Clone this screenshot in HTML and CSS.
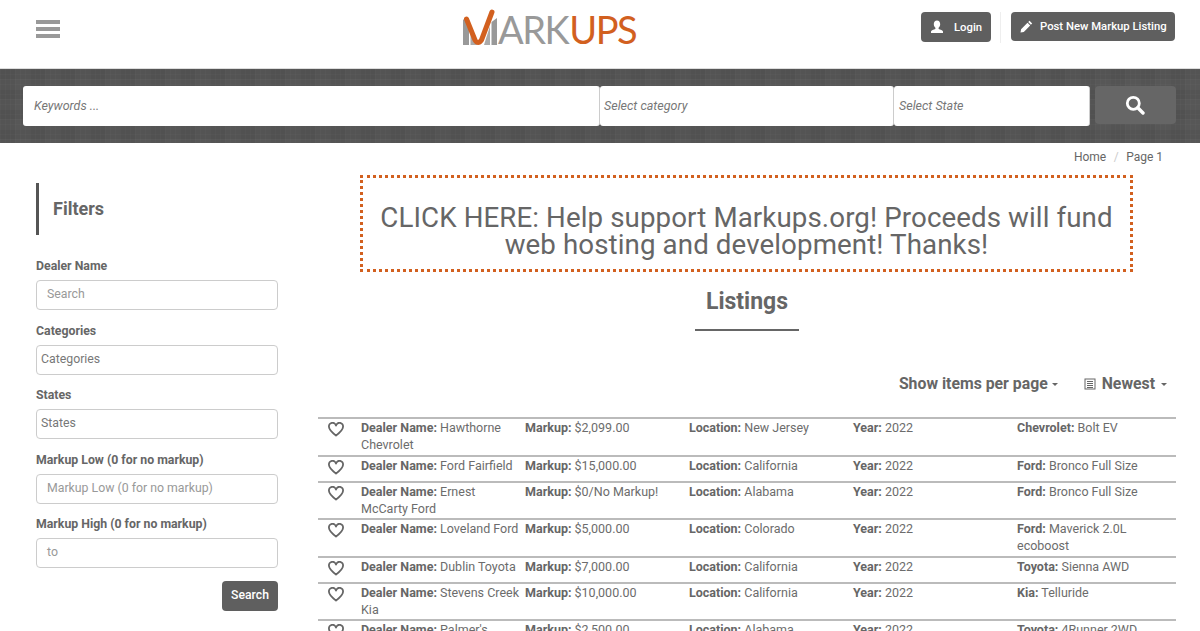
FILE: index.html
```html
<!DOCTYPE html>
<html lang="en">
<head>
  <meta charset="UTF-8" />
  <title>Markups</title>
  <link rel="stylesheet" href="styles.css">
</head>
<body>

  <header class="topbar">
    <div class="burger"><span></span><span></span><span></span></div>
    <div class="logo">
      <svg class="logo-mark" width="35" height="37" viewBox="0 0 35 37">
        <path d="M0 11 L2 9 L6 17 L6 36 L0 36 Z" fill="#999"/>
        <path d="M7.500 20 L14 36 L7.500 36 Z" fill="#aaa"/>
        <path d="M27 17 L27 36 L21 36 Z" fill="#aaa"/>
        <path d="M28.500 13 L34 9 L34 36 L28.500 36 Z" fill="#999"/>
        <path d="M3.500 10 L12 31 Q15 36 18.500 31 L29 3" fill="none" stroke="#d2601f" stroke-width="5" stroke-linecap="round" stroke-linejoin="round"/>
      </svg>
      <span class="logo-grey">ARK</span><span class="logo-orange">UPS</span>
    </div>
    <div class="top-actions">
      <a class="btn btn-login">
        <svg width="14" height="14" viewBox="0 0 14 14"><path d="M7 0.500c2 0 3.200 1.500 3.200 3.600 0 1.600-.7 3-1.600 3.700v1.200c1.600.6 4.400 1.100 4.400 2.600V13H1v-1.400c0-1.500 2.800-2 4.400-2.600V7.800C4.500 7.100 3.800 5.700 3.800 4.100 3.800 2 5 .5 7 .5z" fill="#fff"/></svg>
        <span>Login</span>
      </a>
      <div class="top-sep"></div>
      <a class="btn btn-post">
        <svg width="13" height="13" viewBox="0 0 13 13"><path d="M9.500 0.800l2.700 2.700-1.300 1.300-2.700-2.700zM7.500 2.800l2.700 2.700-6.400 6.400L0.500 12.500l.6-3.300z" fill="#fff"/></svg>
        <span>Post New Markup Listing</span>
      </a>
    </div>
  </header>

  <section class="searchbar">
    <div class="search-fields">
      <div class="sf sf-keywords">Keywords ...</div>
      <div class="sf sf-cat">Select category</div>
      <div class="sf sf-state">Select State</div>
    </div>
    <div class="search-go">
      <svg width="20" height="20" viewBox="0 0 20 20"><circle cx="8.300" cy="8.300" r="6" fill="none" stroke="#fff" stroke-width="2.800"/><path d="M12.800 12.800L18 18" stroke="#fff" stroke-width="3.400" stroke-linecap="round"/></svg>
    </div>
  </section>

  <div class="crumbs"><span>Home</span><span class="crumb-sep">/</span><span>Page 1</span></div>

  <div class="content">
    <aside class="sidebar">
      <h3 class="filters-title">Filters</h3>
      <label>Dealer Name</label>
      <div class="field field-hint">Search</div>
      <label>Categories</label>
      <div class="field field-select">Categories</div>
      <label>States</label>
      <div class="field field-select">States</div>
      <label>Markup Low (0 for no markup)</label>
      <div class="field field-hint">Markup Low (0 for no markup)</div>
      <label>Markup High (0 for no markup)</label>
      <div class="field field-hint">to</div>
      <div class="filter-foot"><a class="btn btn-search">Search</a></div>
    </aside>

    <main class="main">
      <div class="promo">CLICK HERE: Help support Markups.org! Proceeds will fund web hosting and development! Thanks!</div>
      <h2 class="listings-title">Listings</h2>
      <div class="sort-row">
        <span class="sort-item sort-perpage">Show items per page <i class="caret"></i></span>
        <span class="sort-item sort-newest">
          <svg width="12" height="12" viewBox="0 0 12 12"><rect x="1" y="1" width="10" height="10" fill="none" stroke="#666"/><path d="M3 3.500h6M3 5.500h6M3 7.500h6M3 9.500h6" stroke="#666"/></svg>
          Newest <i class="caret"></i>
        </span>
      </div>

      <div class="listing">
        <div class="row">
          <div class="heart"><svg width="16" height="15" viewBox="0 0 16 15"><path d="M8 13.600C3.500 10 1 7.800 1 5A3.500 3.500 0 0 1 8 3.700 3.500 3.500 0 0 1 15 5C15 7.800 12.500 10 8 13.600z"/></svg></div>
          <div><b>Dealer Name:</b> Hawthorne Chevrolet</div>
          <div><b>Markup:</b> $2,099.00</div>
          <div><b>Location:</b> New Jersey</div>
          <div><b>Year:</b> 2022</div>
          <div><b>Chevrolet:</b> Bolt EV</div>
        </div>
        <div class="row">
          <div class="heart"><svg width="16" height="15" viewBox="0 0 16 15"><path d="M8 13.600C3.500 10 1 7.800 1 5A3.500 3.500 0 0 1 8 3.700 3.500 3.500 0 0 1 15 5C15 7.800 12.500 10 8 13.600z"/></svg></div>
          <div><b>Dealer Name:</b> Ford Fairfield</div>
          <div><b>Markup:</b> $15,000.00</div>
          <div><b>Location:</b> California</div>
          <div><b>Year:</b> 2022</div>
          <div><b>Ford:</b> Bronco Full Size</div>
        </div>
        <div class="row">
          <div class="heart"><svg width="16" height="15" viewBox="0 0 16 15"><path d="M8 13.600C3.500 10 1 7.800 1 5A3.500 3.500 0 0 1 8 3.700 3.500 3.500 0 0 1 15 5C15 7.800 12.500 10 8 13.600z"/></svg></div>
          <div><b>Dealer Name:</b> Ernest McCarty Ford</div>
          <div><b>Markup:</b> $0/No Markup!</div>
          <div><b>Location:</b> Alabama</div>
          <div><b>Year:</b> 2022</div>
          <div><b>Ford:</b> Bronco Full Size</div>
        </div>
        <div class="row">
          <div class="heart"><svg width="16" height="15" viewBox="0 0 16 15"><path d="M8 13.600C3.500 10 1 7.800 1 5A3.500 3.500 0 0 1 8 3.700 3.500 3.500 0 0 1 15 5C15 7.800 12.500 10 8 13.600z"/></svg></div>
          <div><b>Dealer Name:</b> Loveland Ford</div>
          <div><b>Markup:</b> $5,000.00</div>
          <div><b>Location:</b> Colorado</div>
          <div><b>Year:</b> 2022</div>
          <div><b>Ford:</b> Maverick 2.0L ecoboost</div>
        </div>
        <div class="row">
          <div class="heart"><svg width="16" height="15" viewBox="0 0 16 15"><path d="M8 13.600C3.500 10 1 7.800 1 5A3.500 3.500 0 0 1 8 3.700 3.500 3.500 0 0 1 15 5C15 7.800 12.500 10 8 13.600z"/></svg></div>
          <div><b>Dealer Name:</b> Dublin Toyota</div>
          <div><b>Markup:</b> $7,000.00</div>
          <div><b>Location:</b> California</div>
          <div><b>Year:</b> 2022</div>
          <div><b>Toyota:</b> Sienna AWD</div>
        </div>
        <div class="row">
          <div class="heart"><svg width="16" height="15" viewBox="0 0 16 15"><path d="M8 13.600C3.500 10 1 7.800 1 5A3.500 3.500 0 0 1 8 3.700 3.500 3.500 0 0 1 15 5C15 7.800 12.500 10 8 13.600z"/></svg></div>
          <div><b>Dealer Name:</b> Stevens Creek Kia</div>
          <div><b>Markup:</b> $10,000.00</div>
          <div><b>Location:</b> California</div>
          <div><b>Year:</b> 2022</div>
          <div><b>Kia:</b> Telluride</div>
        </div>
        <div class="row">
          <div class="heart"><svg width="16" height="15" viewBox="0 0 16 15"><path d="M8 13.600C3.500 10 1 7.800 1 5A3.500 3.500 0 0 1 8 3.700 3.500 3.500 0 0 1 15 5C15 7.800 12.500 10 8 13.600z"/></svg></div>
          <div><b>Dealer Name:</b> Palmer's</div>
          <div><b>Markup:</b> $2,500.00</div>
          <div><b>Location:</b> Alabama</div>
          <div><b>Year:</b> 2022</div>
          <div><b>Toyota:</b> 4Runner 2WD</div>
        </div>
      </div>
    </main>
  </div>

</body>
</html>
```

FILE: styles.css
```css
html, body {
  margin: 0;
  padding: 0;
  height: 100%;
  overflow: hidden;
  background-color: #fff;
  color: #666;
  font-family: Roboto, 'Noto Sans', sans-serif;
  font-size: 13px;
}

.topbar {
  height: 68px;
  box-sizing: border-box;
  display: flex;
  align-items: flex-start;
  justify-content: space-between;
  padding: 0 25px 0 36px;
  position: relative;
}

.burger {
  margin-top: 20px;
  width: 24px;
  display: flex;
  flex-direction: column;
  gap: 3px;
}

.burger span {
  display: block;
  height: 4px;
  background-color: #999;
}

.logo {
  position: absolute;
  left: 463px;
  top: 9px;
  display: flex;
  align-items: flex-end;
  height: 37px;
  font-family: Lato, sans-serif;
  font-size: 38px;
  line-height: 38px;
  letter-spacing: -1.500px;
}

.logo-mark {
  display: block;
}

.logo-grey {
  color: #999;
  margin-bottom: -2px;
}

.logo-orange {
  color: #d2601f;
  margin-left: 1px;
  margin-bottom: -2px;
}

.top-actions {
  display: flex;
  align-items: flex-start;
  margin-top: 12px;
}

.btn {
  display: flex;
  align-items: center;
  background-color: #5f5f5f;
  color: #fff;
  border-radius: 4px;
  font-size: 11.300px;
  font-weight: 500;
  box-sizing: border-box;
}

.btn-login {
  width: 70px;
  height: 30px;
  padding-left: 9px;
  gap: 10px;
}

.top-sep {
  width: 1px;
  height: 31px;
  background-color: #eee;
  margin: 0 10px 0 9px;
}

.btn-post {
  height: 29px;
  width: 164px;
  padding-left: 9px;
  gap: 7px;
}

.searchbar {
  height: 75px;
  box-sizing: border-box;
  padding: 17px 24px 0 23px;
  display: flex;
  justify-content: space-between;
  align-items: flex-start;
  background-color: #575757;
  background-image:
    linear-gradient(rgba(255, 255, 255, 0.02) 1px, transparent 1px),
    linear-gradient(90deg, rgba(255, 255, 255, 0.02) 1px, transparent 1px),
    linear-gradient(rgba(0, 0, 0, 0.03) 50%, transparent 50%),
    linear-gradient(90deg, rgba(0, 0, 0, 0.03) 50%, transparent 50%);
  background-size: 5px 5px, 5px 5px, 20px 20px, 30px 30px;
  border-top: 1px solid #ddd;
}

.search-fields {
  display: flex;
  width: 1067px;
  height: 40px;
}

.sf {
  background-color: #fff;
  border-radius: 3px;
  box-sizing: border-box;
  line-height: 40px;
  font-style: italic;
  font-size: 12.500px;
  color: #777;
  border-right: 1px solid #ccc;
}

.sf-keywords {
  width: 577px;
  padding-left: 11px;
}

.sf-cat {
  width: 294px;
  padding-left: 4px;
}

.sf-state {
  width: 196px;
  padding-left: 5px;
}

.search-go {
  width: 81px;
  height: 38px;
  background-color: #666;
  border-radius: 4px;
  display: flex;
  align-items: center;
  justify-content: center;
  padding-right: 2px;
  box-sizing: border-box;
}

.crumbs {
  display: flex;
  justify-content: flex-end;
  padding: 6px 37px 0 0;
  height: 24px;
  box-sizing: border-box;
  font-size: 12px;
  line-height: 17px;
}

.crumb-sep {
  color: #ccc;
  margin: 0 7.500px;
}

.content {
  display: flex;
  padding: 8px 24px 0 36px;
}

.sidebar {
  width: 242px;
  flex: none;
  margin-right: 40px;
  padding-top: 8px;
}

.filters-title {
  margin: 0 0 23px;
  height: 52px;
  line-height: 52px;
  border-left: 3px solid #555;
  padding-left: 14px;
  font-size: 18px;
  font-weight: 700;
}

.sidebar label {
  display: block;
  font-weight: 700;
  font-size: 12.300px;
  line-height: 17px;
  margin-bottom: 5px;
}

.field {
  height: 30px;
  box-sizing: border-box;
  border: 1px solid #ccc;
  border-radius: 4px;
  line-height: 27px;
  margin-bottom: 12.500px;
  font-size: 12.300px;
  color: #777;
}

.field-hint {
  padding-left: 10px;
  color: #999;
}

.field-select {
  padding-left: 4px;
}

.filter-foot {
  display: flex;
  justify-content: flex-end;
  margin-top: 13px;
}

.btn-search {
  width: 56px;
  height: 30px;
  justify-content: center;
  font-size: 12.200px;
  padding-bottom: 2px;
}

.main {
  flex: 1;
  min-width: 0;
}

.promo {
  box-sizing: border-box;
  width: 773px;
  height: 97px;
  margin: 0 0 0 42px;
  border: 3px dotted #d2601f;
  padding: 26px 8px 0;
  font-size: 27.700px;
  line-height: 27px;
  letter-spacing: 0.100px;
  text-align: center;
  color: #666;
}

.listings-title {
  width: 104px;
  margin: 14px 0 0 377px;
  padding-bottom: 11px;
  border-bottom: 2px solid #666;
  text-align: center;
  font-size: 23px;
  line-height: 32px;
  font-weight: 700;
}

.sort-row {
  display: flex;
  justify-content: flex-end;
  gap: 26px;
  margin-top: 41px;
  margin-bottom: 10px;
  padding-right: 9px;
  font-size: 15.800px;
  line-height: 24px;
  font-weight: 700;
  height: 35px;
}

.sort-item {
  display: flex;
  align-items: center;
  gap: 6px;
  height: 24px;
}

.sort-perpage {
  gap: 4px;
}

.caret {
  display: inline-block;
  border-top: 3px solid #666;
  border-left: 3px solid transparent;
  border-right: 3px solid transparent;
}

.listing {
  border-top: 2px solid #bbb;
}

.row {
  display: grid;
  grid-template-columns: 43px repeat(4, 164px) 1fr;
  padding: 0 0 1px;
  border-bottom: 2px solid #bbb;
  font-size: 12.500px;
  line-height: 17.300px;
  color: #6c6c6c;
}

.row > div {
  padding-right: 4px;
}

.row > .heart {
  padding: 3px 0 0 10px;
  min-height: 20px;
}

.heart path {
  fill: none;
  stroke: #666;
  stroke-width: 1.800;
  stroke-linejoin: round;
}

.row b {
  font-weight: 700;
  color: #666;
}
```
